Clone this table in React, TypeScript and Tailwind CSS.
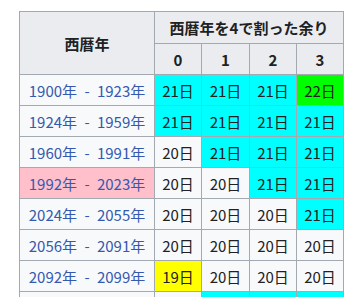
import React from "react";

type Cell = { v: string; bg?: string };

const C = "bg-[#00ffff]";
const G = "bg-[#00ff00]";
const Y = "bg-[#ffff00]";

const rows: { label: string; pink?: boolean; cells: Cell[] }[] = [
  { label: "1900年 - 1923年", cells: [{ v: "21日", bg: C }, { v: "21日", bg: C }, { v: "21日", bg: C }, { v: "22日", bg: G }] },
  { label: "1924年 - 1959年", cells: [{ v: "21日", bg: C }, { v: "21日", bg: C }, { v: "21日", bg: C }, { v: "21日", bg: C }] },
  { label: "1960年 - 1991年", cells: [{ v: "20日" }, { v: "21日", bg: C }, { v: "21日", bg: C }, { v: "21日", bg: C }] },
  { label: "1992年 - 2023年", pink: true, cells: [{ v: "20日" }, { v: "20日" }, { v: "21日", bg: C }, { v: "21日", bg: C }] },
  { label: "2024年 - 2055年", cells: [{ v: "20日" }, { v: "20日" }, { v: "20日" }, { v: "21日", bg: C }] },
  { label: "2056年 - 2091年", cells: [{ v: "20日" }, { v: "20日" }, { v: "20日" }, { v: "20日" }] },
  { label: "2092年 - 2099年", cells: [{ v: "19日", bg: Y }, { v: "20日" }, { v: "20日" }, { v: "20日" }] },
  { label: "2100年 - 2123年", cells: [{ v: "20日" }, { v: "21日", bg: C }, { v: "21日", bg: C }, { v: "21日", bg: C }] },
];

export default function App() {
  return (
    <div
      className="w-[358px] h-[297px] overflow-hidden bg-white pl-[19px] pt-[11px] text-[15px] leading-none text-[#202122]"
      style={{ fontFamily: '"Noto Sans CJK JP", "Noto Sans", sans-serif' }}
    >
      <table className="border-collapse border border-[#a2a9b1] bg-[#f8f9fa]">
        <thead>
          <tr className="h-[32px]">
            <th
              rowSpan={2}
              className="w-[135px] border border-[#a2a9b1] bg-[#eaecf0] p-0 text-center align-middle font-bold"
            >
              西暦年
            </th>
            <th
              colSpan={4}
              className="border border-[#a2a9b1] bg-[#eaecf0] p-0 text-center align-middle font-bold"
            >
              西暦年を4で割った余り
            </th>
          </tr>
          <tr className="h-[31px]">
            {["0", "1", "2", "3"].map((h, i) => (
              <th
                key={h}
                className={`${i === 1 ? "w-[48px]" : "w-[47px]"} border border-[#a2a9b1] bg-[#eaecf0] p-0 text-center align-middle font-bold`}
              >
                {h}
              </th>
            ))}
          </tr>
        </thead>
        <tbody>
          {rows.map((r) => (
            <tr key={r.label} className="h-[31px]">
              <td
                className={`border border-[#a2a9b1] p-0 text-center align-middle text-[#3459b0] [word-spacing:4px] ${r.pink ? "bg-[#ffc0cb]" : ""}`}
              >
                {r.label}
              </td>
              {r.cells.map((c, i) => (
                <td
                  key={i}
                  className={`border border-[#a2a9b1] p-0 text-center align-middle ${c.bg ?? ""}`}
                >
                  {c.v}
                </td>
              ))}
            </tr>
          ))}
        </tbody>
      </table>
    </div>
  );
}
